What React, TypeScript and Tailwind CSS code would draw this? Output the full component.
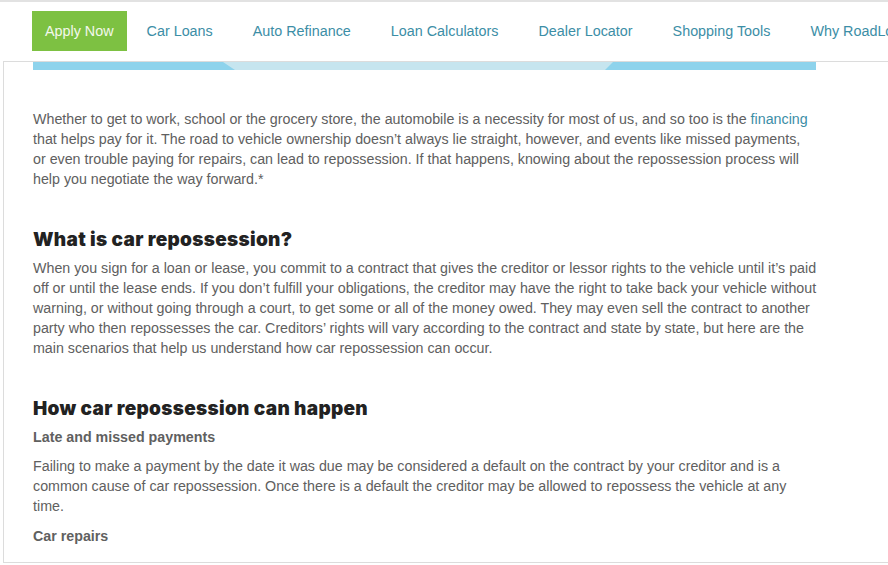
import React from "react";

const navLinks = [
  "Car Loans",
  "Auto Refinance",
  "Loan Calculators",
  "Dealer Locator",
  "Shopping Tools",
  "Why RoadLoans",
];

const body = "text-[14.25px] leading-[20px] text-[#606060]";
const heading =
  "text-[19px] leading-[24px] font-black text-[#222] tracking-[0.3px] [font-family:Inter,'Liberation_Sans',sans-serif]";

export default function App() {
  return (
    <div className="w-[888px] h-[565px] overflow-hidden bg-white [font-family:'Liberation_Sans',Arial,sans-serif]">
      {/* top navigation */}
      <nav className="border-t-2 border-[#e2e2e2] pt-[9px] pb-[10px] pl-[32px] flex items-center whitespace-nowrap overflow-hidden">
        <a className="h-[40px] px-[13px] pt-px flex items-center bg-[#7dc142] text-[#f3f8ec] text-[14.35px]">
          Apply Now
        </a>
        {navLinks.map((label) => (
          <a
            key={label}
            className="h-[40px] px-[20px] pt-px flex items-center text-[14.35px] text-[#3c8ea6]"
          >
            {label}
          </a>
        ))}
      </nav>

      <main className="ml-[3px] h-[502px] border-t border-l border-b border-[#dcdcdc]">
        {/* striped banner edge */}
        <div className="ml-[29px] w-[783px] h-[8px] bg-[#c6e5ef] flex justify-between">
          <div className="w-[202px] h-full bg-[#8ed3ec] [clip-path:polygon(0_0,190px_0,202px_100%,0_100%)]" />
          <div className="w-[211px] h-full bg-[#8ed3ec] [clip-path:polygon(8px_0,100%_0,100%_100%,0_100%)]" />
        </div>

        <article className="ml-[29px] w-[784px] pt-[39px]">
          <p className={body}>
            Whether to get to work, school or the grocery store, the automobile is a necessity for
            most of us, and so too is the <span className="text-[#3c8ea6]">financing</span> that
            helps pay for it. The road to vehicle ownership doesn’t always lie straight, however,
            and events like missed payments, or{"\u00a0"}even trouble paying for repairs, can lead to
            repossession. If that happens, knowing about the repossession process will help you
            negotiate the way forward.*
          </p>

          <h2 className={`${heading} mt-[39px]`}>What is car repossession?</h2>
          <p className={`${body} mt-[6px]`}>
            When you sign for a loan or lease, you commit to a contract that gives the creditor or
            lessor rights to the vehicle until it’s paid off or until the lease ends. If you don’t
            fulfill your obligations, the creditor may have the right to take back your vehicle
            without warning, or without going through a court, to get some or all of the money
            owed. They may even sell the contract to another party who then repossesses the car.
            Creditors’ rights will vary according to the contract and state by state, but here are
            the main scenarios that help us understand how car repossession can occur.
          </p>

          <h2 className={`${heading} mt-[39px]`}>How car repossession can happen</h2>
          <h3 className={`${body} font-bold mt-[6px]`}>Late and missed payments</h3>
          <p className={`${body} mt-[9px]`}>
            Failing to make a payment by the date it was due may be considered a default on the
            contract by your creditor and is a common cause of car repossession. Once there is a
            default the creditor may be allowed to repossess the vehicle at any time.
          </p>
          <h3 className={`${body} font-bold mt-[10px]`}>Car repairs</h3>
        </article>
      </main>
    </div>
  );
}
